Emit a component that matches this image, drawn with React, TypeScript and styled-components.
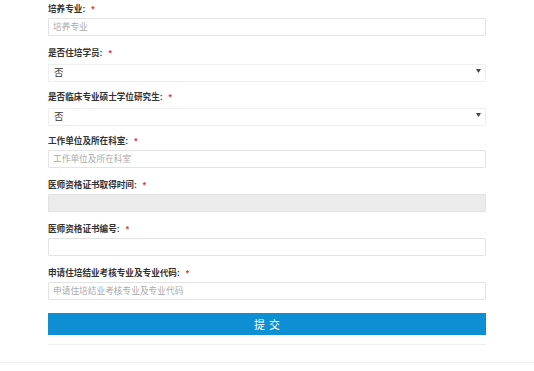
import { Component } from 'react'
import styled, { createGlobalStyle } from 'styled-components'

const GlobalStyle = createGlobalStyle`
  html, body {
    margin: 0;
    padding: 0;
    background: #fff;
    font-family: "Liberation Sans", "Noto Sans CJK SC", sans-serif;
  }
`

const Page = styled.div`
  width: 534px;
  padding-top: 2px;
`

const FormBox = styled.div`
  width: 438px;
  margin-left: 48px;
  display: flex;
  flex-direction: column;
`

const Field = styled.div`
  display: flex;
  flex-direction: column;
  margin-bottom: 10px;
`

const Label = styled.label`
  height: 14px;
  line-height: 14px;
  margin-bottom: 2px;
  font-size: 8.6px;
  font-weight: 700;
  color: #333;

  .req{
    color: #e4393c;
    margin-left: 6px;
  }
`

const TextInput = styled.input<{ $disabled?: boolean }>`
  box-sizing: border-box;
  width: 100%;
  height: 18px;
  padding: 0 4px;
  border: 1px solid #e3e3e3;
  border-radius: 1px;
  background: ${p => (p.$disabled ? '#ebebeb' : '#fff')};
  font-family: inherit;
  font-size: 8.7px;
  color: #333;
  outline: none;

  &::placeholder{
    color: #aaa;
    font-size: 8.7px;
  }
`

const SelectWrap = styled.div`
  position: relative;
  width: 100%;
  height: 18px;

  svg{
    position: absolute;
    right: 5px;
    top: 7px;
  }
`

const Select = styled.select`
  box-sizing: border-box;
  width: 100%;
  height: 18px;
  padding: 0 5px;
  border: 1px solid #eeeeee;
  border-radius: 1px;
  background: #fff;
  font-family: inherit;
  font-size: 9.5px;
  color: #333;
  appearance: none;
  outline: none;
`

const SubmitBtn = styled.button`
  height: 22px;
  margin-top: 3px;
  border: 0;
  border-radius: 0;
  background: #0f8fd3;
  color: #fff;
  font-family: inherit;
  font-size: 11px;
  letter-spacing: 4px;
  text-indent: 4px;
  cursor: pointer;
`

const Divider = styled.div`
  height: 1px;
  margin-top: 9px;
  background: #efefef;
`

const FootLine = styled.div`
  margin-top: 17px;
  border-top: 1px solid #f1f1f1;
  height: 8px;
`

const Caret = () => (
  <svg width="5" height="4" viewBox="0 0 5 4">
    <path d="M0 0H5L2.5 4Z" fill="#444" />
  </svg>
)

interface FieldItem {
  label: string,
  kind: 'text' | 'select' | 'disabled',
  placeholder?: string,
  value?: string,
}

const fields: FieldItem[] = [
  { label: '培养专业:', kind: 'text', placeholder: '培养专业' },
  { label: '是否住培学员:', kind: 'select', value: '否' },
  { label: '是否临床专业硕士学位研究生:', kind: 'select', value: '否' },
  { label: '工作单位及所在科室:', kind: 'text', placeholder: '工作单位及所在科室' },
  { label: '医师资格证书取得时间:', kind: 'disabled' },
  { label: '医师资格证书编号:', kind: 'text' },
  { label: '申请住培结业考核专业及专业代码:', kind: 'text', placeholder: '申请住培结业考核专业及专业代码' },
]

class App extends Component {
  renderControl(f: FieldItem) {
    if (f.kind === 'select') {
      return (
        <SelectWrap>
          <Select defaultValue={f.value}>
            <option value="否">否</option>
            <option value="是">是</option>
          </Select>
          <Caret />
        </SelectWrap>
      )
    }
    return (
      <TextInput
        type="text"
        placeholder={f.placeholder}
        disabled={f.kind === 'disabled'}
        $disabled={f.kind === 'disabled'} />
    )
  }

  render() {
    return (
      <Page>
        <GlobalStyle />
        <FormBox>
          {fields.map(f => (
            <Field key={f.label}>
              <Label>{f.label}<span className="req">*</span></Label>
              {this.renderControl(f)}
            </Field>
          ))}
          <SubmitBtn>提交</SubmitBtn>
          <Divider />
        </FormBox>
        <FootLine />
      </Page>
    )
  }
}
export default App
